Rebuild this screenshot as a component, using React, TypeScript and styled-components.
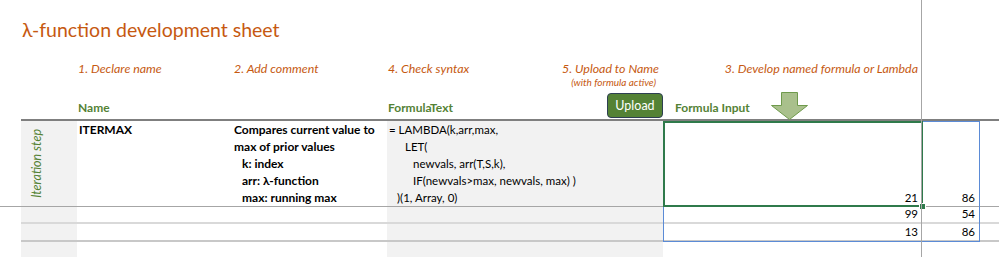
import React from 'react';
import styled, { createGlobalStyle } from 'styled-components';

const GlobalStyle = createGlobalStyle`
  html, body {
    margin: 0;
    padding: 0;
    background: #ffffff;
  }
  body {
    font-family: 'Lato', 'Liberation Sans', sans-serif;
    color: #000000;
  }
`;

const COLS = '21px 56px 156px 154px 276px 259px 57px 20px';
// 제목 줄은 왼쪽 여백 열이 빠짐
const HEAD_COLS = '56px 156px 154px 276px 259px 57px 20px';

const Page = styled.div`
  position: relative;
  width: 999px;
  height: 257px;
  overflow: hidden;
  background: #ffffff;
`;

// 제목
const Title = styled.h1`
  margin: 0;
  padding: 18px 0 0 22px;
  height: 37px;
  box-sizing: border-box;
  font-size: 19.5px;
  line-height: 24px;
  font-weight: 400;
  color: #c65911;
`;

// 단계 안내 줄
const StepRow = styled.div`
  display: grid;
  grid-template-columns: ${COLS};
  height: 54px;
  padding-top: 24px;
  box-sizing: border-box;
`;

const Step = styled.div<{ $col: number; $right?: boolean }>`
  grid-column: ${(p) => p.$col};
  grid-row: 1;
  display: flex;
  flex-direction: column;
  align-items: ${(p) => (p.$right ? 'flex-end' : 'flex-start')};
  padding: ${(p) => (p.$right ? '0 4px 0 0' : '0 0 0 1px')};
  font-style: italic;
  font-size: 12.4px;
  line-height: 15px;
  color: #c65911;
`;

const StepNote = styled.span`
  font-size: 10px;
  line-height: 13px;
  padding-right: 3px;
`;

// 열 제목 줄
const HeaderRow = styled.div`
  display: grid;
  grid-template-columns: ${HEAD_COLS};
  height: 30px;
  margin-left: 21px;
  box-sizing: border-box;
  border-bottom: 2px solid #7f7f7f;
`;

const HeaderCell = styled.div<{ $col: number; $between?: boolean }>`
  grid-column: ${(p) => p.$col};
  display: flex;
  align-items: flex-end;
  justify-content: ${(p) => (p.$between ? 'space-between' : 'flex-start')};
  padding: 0 0 4px 1px;
  font-size: 12px;
  font-weight: 700;
  color: #548235;
`;

const UploadButton = styled.button`
  width: 56px;
  height: 25px;
  margin-bottom: -3px;
  background: #548235;
  color: #ffffff;
  border: 1.5px solid #2e3f52;
  border-radius: 4px;
  font-family: 'Lato', 'Liberation Sans', sans-serif;
  font-size: 12.5px;
  padding: 0;
  cursor: pointer;
`;

const InputHead = styled.div`
  display: flex;
  align-items: flex-end;
  gap: 20px;
  padding-left: 11px;
`;

const InputLabel = styled.span`
  padding-bottom: 4px;
`;

const Arrow = styled.svg`
  display: block;
  margin-bottom: -1px;
`;

// 표 본문
const Table = styled.div`
  position: relative;
`;

const Row = styled.div<{ $h: number; $line: string; $lineW: number; $fromEdge?: boolean }>`
  display: grid;
  grid-template-columns: ${COLS};
  height: ${(p) => p.$h}px;

  & > * {
    border-bottom: ${(p) => p.$lineW}px solid ${(p) => p.$line};
  }
  & > *:first-child {
    border-bottom-color: ${(p) => (p.$fromEdge ? p.$line : 'transparent')};
  }
`;

const Cell = styled.div<{ $shade?: boolean; $bold?: boolean; $right?: boolean; $pad?: number }>`
  background: ${(p) => (p.$shade ? '#f2f2f2' : '#ffffff')};
  font-size: ${(p) => (p.$bold ? 12 : 11.5)}px;
  line-height: 17px;
  font-weight: ${(p) => (p.$bold ? 700 : 400)};
  padding: 0 ${(p) => (p.$right ? 4 : 0)}px 0 ${(p) => p.$pad ?? 1}px;
  display: flex;
  flex-direction: column;
  justify-content: ${(p) => (p.$right ? 'flex-end' : 'flex-start')};
  align-items: ${(p) => (p.$right ? 'flex-end' : 'stretch')};
  overflow: hidden;
  white-space: nowrap;
`;

const Line = styled.div<{ $indent?: number }>`
  padding-left: ${(p) => p.$indent ?? 0}px;
`;

const SideLabel = styled.div`
  height: 100%;
  display: flex;
  align-items: center;
  padding-left: 6px;
`;

const SideText = styled.span`
  writing-mode: vertical-rl;
  transform: rotate(180deg);
  font-style: italic;
  font-size: 12.5px;
  color: #548235;
`;

const Filler = styled.div`
  display: grid;
  grid-template-columns: ${COLS};
  height: 40px;
`;

// 선택 영역 (셀 위에 겹침)
const Selection = styled.div<{ $left: number; $top: number; $w: number; $h: number; $color: string; $bw: number }>`
  position: absolute;
  left: ${(p) => p.$left}px;
  top: ${(p) => p.$top}px;
  width: ${(p) => p.$w}px;
  height: ${(p) => p.$h}px;
  box-sizing: border-box;
  border: ${(p) => p.$bw}px solid ${(p) => p.$color};
  pointer-events: none;
`;

const FillHandle = styled.div`
  position: absolute;
  left: 919px;
  top: 82px;
  width: 5px;
  height: 5px;
  background: #2f7a4b;
  border: 1px solid #ffffff;
`;

const PaneDivider = styled.div`
  position: absolute;
  left: 921px;
  top: 0;
  width: 1px;
  height: 257px;
  background: #a6a6a6;
`;

export default function App() {
  return (
    <>
      <GlobalStyle />
      <Page>
        <Title>λ-function development sheet</Title>

        <StepRow>
          <Step $col={3}>1. Declare name</Step>
          <Step $col={4}>2. Add comment</Step>
          <Step $col={5}>4. Check syntax</Step>
          <Step $col={5} $right>
            5. Upload to Name
            <StepNote>(with formula active)</StepNote>
          </Step>
          <Step $col={6} $right>3. Develop named formula or Lambda</Step>
        </StepRow>

        <HeaderRow>
          <HeaderCell $col={2}>Name</HeaderCell>
          <HeaderCell $col={4} $between>
            FormulaText
            <UploadButton>Upload</UploadButton>
          </HeaderCell>
          <HeaderCell $col={5} style={{ paddingBottom: 0 }}>
            <InputHead>
              <InputLabel>Formula Input</InputLabel>
              <Arrow width="39" height="28" viewBox="0 0 39 28">
                <path
                  d="M11.5 0.5 H27.5 V13.5 H37.5 L19.5 27.5 L1.5 13.5 H11.5 Z"
                  fill="#a9c08c"
                  stroke="#6f9a4c"
                  strokeWidth="1"
                />
              </Arrow>
            </InputHead>
          </HeaderCell>
        </HeaderRow>

        <Table>
          <Row $h={86} $line="#a6a6a6" $lineW={1.5} $fromEdge>
            <Cell />
            <Cell $shade>
              <SideLabel>
                <SideText>Iteration step</SideText>
              </SideLabel>
            </Cell>
            <Cell $bold $pad={2}>ITERMAX</Cell>
            <Cell $bold>
              <Line>Compares current value to</Line>
              <Line>max of prior values</Line>
              <Line $indent={8}>k: index</Line>
              <Line $indent={8}>arr: λ-function</Line>
              <Line $indent={8}>max: running max</Line>
            </Cell>
            <Cell $shade $pad={2}>
              <Line>= LAMBDA(k,arr,max,</Line>
              <Line $indent={16}>LET(</Line>
              <Line $indent={24}>newvals, arr(T,S,k),</Line>
              <Line $indent={24}>IF(newvals&gt;max, newvals, max) )</Line>
              <Line $indent={8}>)(1, Array, 0)</Line>
            </Cell>
            <Cell $right>21</Cell>
            <Cell $right>86</Cell>
            <Cell />
          </Row>
          <Row $h={17} $line="#d9d9d9" $lineW={2}>
            <Cell />
            <Cell $shade />
            <Cell />
            <Cell />
            <Cell $shade />
            <Cell $right>99</Cell>
            <Cell $right>54</Cell>
            <Cell />
          </Row>
          <Row $h={18} $line="#c8c8c8" $lineW={2}>
            <Cell />
            <Cell $shade />
            <Cell />
            <Cell />
            <Cell $shade />
            <Cell $right>13</Cell>
            <Cell $right>86</Cell>
            <Cell />
          </Row>
          <Filler>
            <Cell />
            <Cell $shade />
            <Cell />
            <Cell />
            <Cell $shade />
          </Filler>

          <Selection $left={663} $top={0} $w={317} $h={121} $color="#5b8bd6" $bw={1.5} />
          <Selection $left={663} $top={0} $w={260} $h={86} $color="#2f7a4b" $bw={2} />
          <FillHandle />
        </Table>

        <PaneDivider />
      </Page>
    </>
  );
}
